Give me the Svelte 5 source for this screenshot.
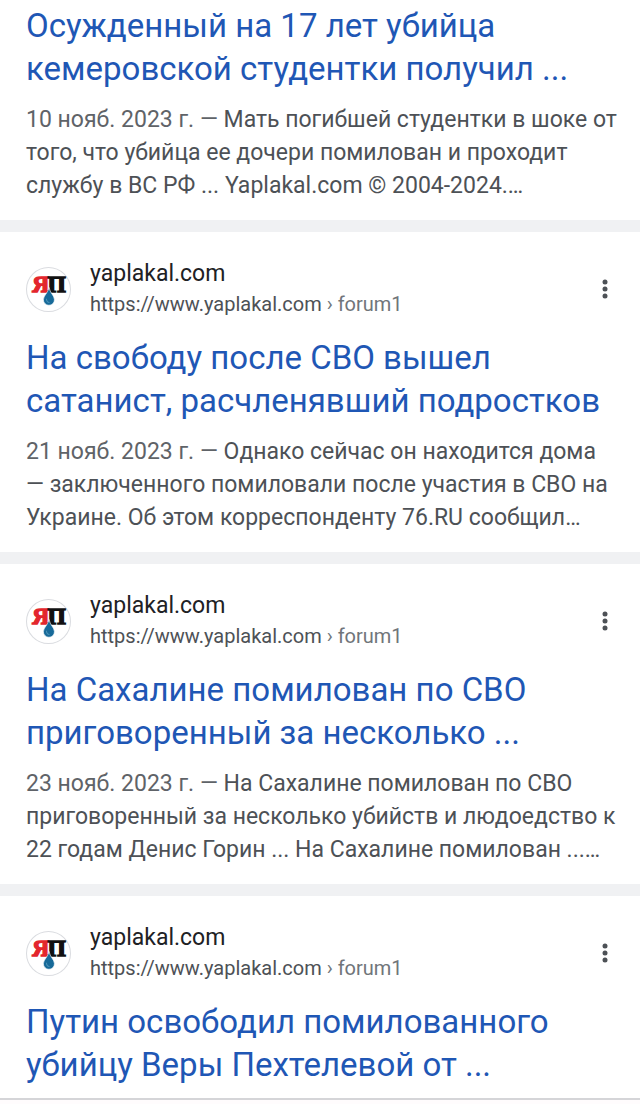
<script>
  const results = [
    {
      title: ['Осужденный на 17 лет убийца', 'кемеровской студентки получил ...'],
      date: '10 нояб. 2023 г.',
      snippet: ['Мать погибшей студентки в шоке от', 'того, что убийца ее дочери помилован и проходит', 'службу в ВС РФ ... Yaplakal.com © 2004-2024.…'],
      headless: true,
    },
    {
      title: ['На свободу после СВО вышел', 'сатанист, расчленявший подростков'],
      date: '21 нояб. 2023 г.',
      snippet: ['Однако сейчас он находится дома', '— заключенного помиловали после участия в СВО на', 'Украине. Об этом корреспонденту 76.RU сообщил…'],
    },
    {
      title: ['На Сахалине помилован по СВО', 'приговоренный за несколько ...'],
      date: '23 нояб. 2023 г.',
      snippet: ['На Сахалине помилован по СВО', 'приговоренный за несколько убийств и людоедство к', '22 годам Денис Горин ... На Сахалине помилован ...…'],
    },
    {
      title: ['Путин освободил помилованного', 'убийцу Веры Пехтелевой от ...'],
    },
  ];
</script>

<main class="results">
  {#each results as r}
    <article class="card" class:headless={r.headless} class:last={!r.snippet}>
      {#if !r.headless}
        <header class="source">
          <svg class="favicon" viewBox="0 0 44 44" aria-hidden="true">
            <circle cx="22" cy="22" r="21.5" fill="#fff" stroke="#dadce0" />
            <text class="logo" x="6" y="24" fill="#e3262d" stroke="#e3262d">Я</text>
            <text class="logo" x="21" y="24" fill="#111" stroke="#111">П</text>
            <path d="M22.500 20C21.500 25.500 17 28 17 32a5.400 5.400 0 0 0 10.800 0C27.800 28 23.500 25.500 22.500 20z" fill="#176a99" stroke="#fff" stroke-width=".6" />
            <path d="M20 31c0 2 1 3.500 3 3.800" fill="none" stroke="#4b93b8" stroke-width="1" />
          </svg>
          <div class="site">
            <div class="name">yaplakal.com</div>
            <div class="url">https://www.yaplakal.com <span>› forum1</span></div>
          </div>
          <button class="more" aria-label="Ещё">
            <svg viewBox="0 0 6 22" aria-hidden="true">
              <circle cx="3" cy="4" r="2.500" />
              <circle cx="3" cy="11" r="2.500" />
              <circle cx="3" cy="18" r="2.500" />
            </svg>
          </button>
        </header>
      {/if}
      <h3><a href="#result">{r.title.join('\n')}</a></h3>
      {#if r.snippet}
        <p><span class="date">{r.date} —</span>{' ' + r.snippet.join('\n')}</p>
      {/if}
    </article>
  {/each}
</main>

<style>
  :global(body) { margin: 0; background: #fffcfd; }

  .results {
    display: flex; flex-direction: column; gap: 12px;
    background: #f0f1f3;
    font-family: Roboto, "Liberation Sans", sans-serif;
  }
  .card { background: #fff; padding: 27px 16px 18px 26px; }
  .card.headless { padding-top: 4px; }
  .card.last { padding-bottom: 12px; border-bottom: 2px solid #d5d5d8; }

  .source { display: flex; align-items: center; margin: 0 10px 17px 0; }
  .favicon { width: 45px; height: 45px; flex: none; }
  .logo { font: bold 23px "Liberation Serif", serif; stroke-width: 1.4; }

  .site { flex: 1; min-width: 0; margin-left: 19px; }
  .name { font-size: 23px; line-height: 30px; color: #202124; }
  .url { font-size: 20px; line-height: 30px; color: #4d5156; }
  .url span { color: #70757a; }

  .more {
    width: 18px; height: 30px; padding: 0; border: 0; background: none;
    display: flex; align-items: center; justify-content: center;
  }
  .more svg { width: 6px; height: 22px; fill: #4d5156; }

  h3 { margin: 0 0 13px; font-size: 33px; line-height: 43px; font-weight: 400; white-space: pre-line; }
  .last h3 { margin-bottom: 0; }
  h3 a { color: #1f57b5; text-decoration: none; }

  p { margin: 0; font-size: 23px; line-height: 33px; color: #4d5156; white-space: pre-line; }
  .date { color: #5f6368; }
</style>
